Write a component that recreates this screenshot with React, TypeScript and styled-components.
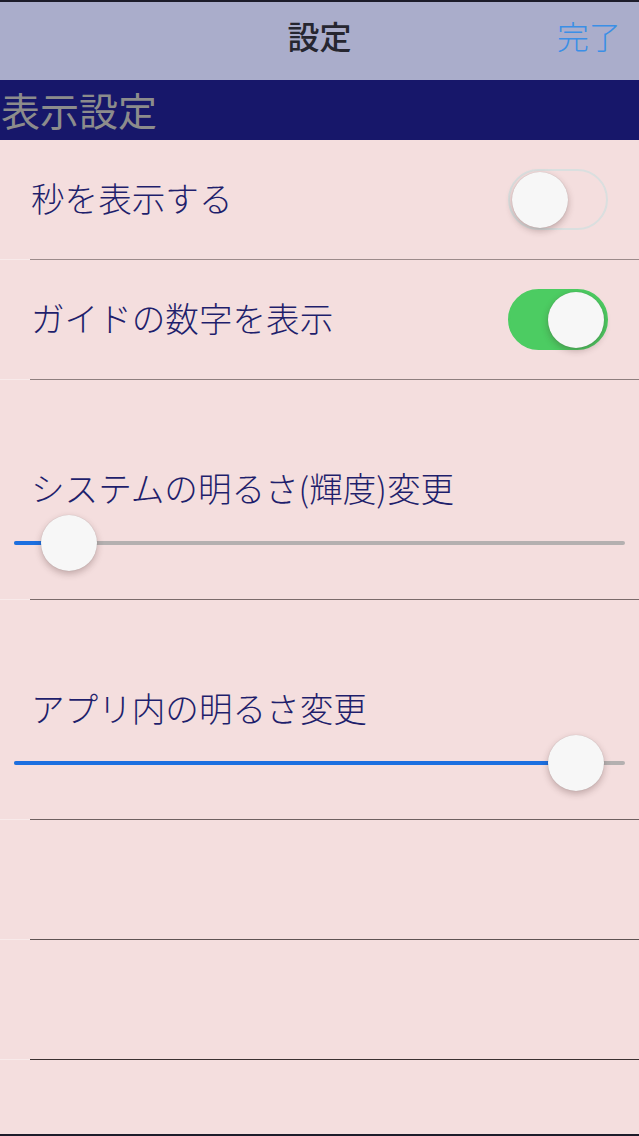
import React from "react";
import styled, { createGlobalStyle } from "styled-components";

const GlobalStyle = createGlobalStyle`
  html, body {
    margin: 0;
    padding: 0;
    background: #f4dede;
  }
  * {
    box-sizing: border-box;
  }
`;

const font = `"Noto Sans CJK JP", "Noto Sans", sans-serif`;

const Screen = styled.div`
  width: 639px;
  height: 1136px;
  display: flex;
  flex-direction: column;
  background: #f4dede;
  border-top: 2px solid #1c1c2a;
  border-bottom: 2px solid #1c1c2a;
  font-family: ${font};
  overflow: hidden;
`;

const NavBar = styled.header`
  height: 78px;
  flex-shrink: 0;
  display: grid;
  grid-template-columns: 1fr auto 1fr;
  align-items: center;
  padding-bottom: 12px;
  background: #aaadcb;
`;

const NavTitle = styled.h1`
  grid-column: 2;
  margin: 0;
  font-size: 32px;
  font-weight: 500;
  color: #262630;
  line-height: 1;
`;

const DoneButton = styled.button`
  grid-column: 3;
  justify-self: end;
  margin-right: 18px;
  padding: 0;
  border: none;
  background: none;
  font-family: ${font};
  font-size: 32px;
  font-weight: 300;
  color: #3b8fe6;
  line-height: 1;
`;

const SectionHeader = styled.div`
  height: 60px;
  flex-shrink: 0;
  display: flex;
  align-items: center;
  padding: 0 0 2px 1px;
  background: #17176a;
  color: #8c8c8c;
  font-size: 39px;
  font-weight: 400;
  line-height: 1;
`;

const SwitchCell = styled.div`
  height: 119px;
  display: flex;
  align-items: center;
  justify-content: space-between;
  padding: 0 31px;
`;

const SliderCell = styled.div`
  height: 219px;
  display: flex;
  flex-direction: column;
  padding-top: 92px;
  gap: 7px;
`;

const EmptyCell = styled.div`
  height: 119px;
`;

const Label = styled.span<{ $inset?: boolean }>`
  font-size: 33.6px;
  font-weight: 300;
  line-height: 40px;
  margin-top: -4px;
  color: #1f1f6c;
  padding-left: ${(p) => (p.$inset ? "31px" : "0")};
`;

const Divider = styled.div<{ $tone: string }>`
  height: 1px;
  display: flex;
  &::before {
    content: "";
    width: 30px;
    background: #f8eaea;
  }
  &::after {
    content: "";
    flex: 1;
    background: ${(p) => p.$tone};
  }
`;

const SwitchTrack = styled.div<{ $on: boolean }>`
  width: 100px;
  height: 61px;
  border-radius: 31px;
  padding: 2px;
  display: flex;
  align-items: center;
  justify-content: ${(p) => (p.$on ? "flex-end" : "flex-start")};
  background: ${(p) => (p.$on ? "#4ccc62" : "transparent")};
  border: 2px solid ${(p) => (p.$on ? "#4ccc62" : "#dadfdf")};
`;

const Knob = styled.div`
  width: 56px;
  height: 56px;
  border-radius: 50%;
  background: #f7f7f7;
  box-shadow: 0 3px 7px rgba(60, 30, 30, 0.28), 0 0 1px rgba(0, 0, 0, 0.2);
`;

const SliderBox = styled.div`
  position: relative;
  height: 56px;
  margin: 0 14px;
  display: flex;
  align-items: center;
`;

const Track = styled.div`
  flex: 1;
  height: 4px;
  border-radius: 2px;
  background: #b4b0b0;
  overflow: hidden;
`;

const Fill = styled.div`
  height: 100%;
  background: #1c6fe0;
`;

const SliderKnob = styled(Knob)`
  position: absolute;
  top: 0;
`;

const Switch = ({ on }: { on: boolean }) => (
  <SwitchTrack $on={on}>
    <Knob />
  </SwitchTrack>
);

const Slider = ({ value }: { value: number }) => {
  const trackWidth = 611;
  const knobSize = 56;
  const left = value * (trackWidth - knobSize);
  return (
    <SliderBox>
      <Track>
        <Fill style={{ width: left + knobSize / 2 }} />
      </Track>
      <SliderKnob style={{ left }} />
    </SliderBox>
  );
};

export default function App() {
  return (
    <>
      <GlobalStyle />
      <Screen>
        <NavBar>
          <NavTitle>設定</NavTitle>
          <DoneButton>完了</DoneButton>
        </NavBar>
        <SectionHeader>表示設定</SectionHeader>

        <SwitchCell>
          <Label>秒を表示する</Label>
          <Switch on={false} />
        </SwitchCell>
        <Divider $tone="#9c8a8a" />

        <SwitchCell>
          <Label>ガイドの数字を表示</Label>
          <Switch on={true} />
        </SwitchCell>
        <Divider $tone="#8e7e7e" />

        <SliderCell>
          <Label $inset>システムの明るさ(輝度)変更</Label>
          <Slider value={0.049} />
        </SliderCell>
        <Divider $tone="#7a6a6a" />

        <SliderCell>
          <Label $inset>アプリ内の明るさ変更</Label>
          <Slider value={0.962} />
        </SliderCell>
        <Divider $tone="#6e6060" />

        <EmptyCell />
        <Divider $tone="#5e5252" />

        <EmptyCell />
        <Divider $tone="#3a3030" />
      </Screen>
    </>
  );
}
